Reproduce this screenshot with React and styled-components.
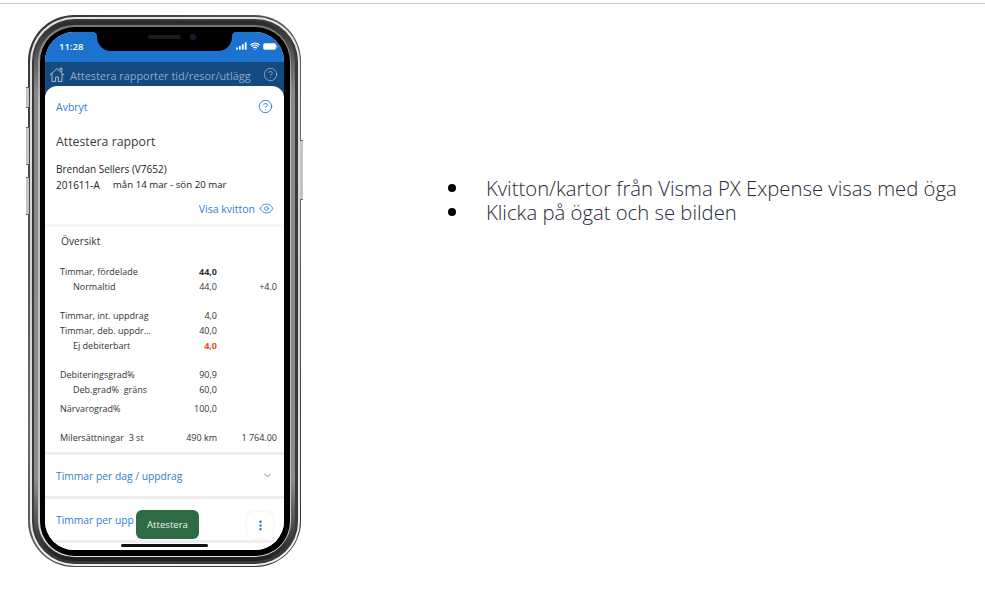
import React from "react"
import styled, { createGlobalStyle } from "styled-components"
import { CircleHelp, Eye, ChevronDown, EllipsisVertical, Wifi } from "lucide-react"

const Global = createGlobalStyle`
  html, body { margin: 0; padding: 0; background: #fff; }
  body { font-family: "Open Sans", sans-serif; overflow: hidden; }
`

const Page = styled.div`
  width: 985px;
  height: 591px;
  box-sizing: border-box;
  border-top: 1px solid #c9c9cd;
  margin-top: 3px;
  display: flex;
  align-items: flex-start;
  padding: 11px 0 0 28px;
`

const PhoneBody = styled.div`
  position: relative;
  flex: none;
  width: 273px;
  height: 552px;
`

// one ring of the metal edge, nested inside the next
const BezelRing = styled.div`
  height: 100%;
  box-sizing: border-box;
  padding: ${p => p.$pad}px;
  border-radius: ${p => p.$radius}px;
  background: ${p => p.$bg};
`

const SideButton = styled.span`
  position: absolute;
  left: ${p => (p.$right ? "auto" : "-2px")};
  right: ${p => (p.$right ? "-2px" : "auto")};
  top: ${p => p.$top}px;
  width: 3px;
  height: ${p => p.$h}px;
  box-sizing: border-box;
  background: #c4c4c4;
  border: 1px solid #666;
  border-width: 1px 0;
`

const Screen = styled.div`
  position: relative;
  height: 100%;
  overflow: hidden;
  border-radius: 29px;
  background: #fff;
  display: flex;
  flex-direction: column;
`

const Notch = styled.div`
  position: absolute;
  top: 0;
  left: 52px;
  width: 135px;
  height: 19px;
  background: #000;
  border-radius: 0 0 14px 14px;

  &::before,
  &::after {
    content: "";
    position: absolute;
    top: 0;
    width: 5px;
    height: 5px;
  }
  &::before {
    left: -5px;
    background: radial-gradient(circle at 0 100%, transparent 5px, #000 5.5px);
  }
  &::after {
    right: -5px;
    background: radial-gradient(circle at 100% 100%, transparent 5px, #000 5.5px);
  }
`

const Speaker = styled.span`
  position: absolute;
  top: 3px;
  left: 51px;
  width: 33px;
  height: 4px;
  border-radius: 2px;
  background: #1c1c1c;
`

const Camera = styled.span`
  position: absolute;
  top: 2px;
  left: 93px;
  width: 6px;
  height: 6px;
  border-radius: 50%;
  background: #10203a;
`

const StatusBar = styled.div`
  flex: none;
  height: 30px;
  box-sizing: border-box;
  background: #1b73cf;
  color: #fff;
  display: flex;
  align-items: center;
  justify-content: space-between;
  padding: 0 6px 2px 14px;
  font-size: 9.5px;
  font-weight: 600;
`

const StatusIcons = styled.div`
  display: flex;
  align-items: center;
  gap: 3px;
`

const AppHeader = styled.div`
  flex: none;
  height: 36px;
  box-sizing: border-box;
  background: #134a80;
  color: #8fa9c4;
  display: flex;
  align-items: flex-start;
  padding: 5px 6px 0 4px;
  gap: 5px;
  font-size: 11px;
  line-height: 17px;
  white-space: nowrap;
`

const HeaderTitle = styled.span`
  flex: 1;
  font-size: 10.9px;
`

const Sheet = styled.div`
  flex: 1;
  margin-top: -12px;
  border-radius: 12px 12px 0 0;
  background: #fff;
  overflow: hidden;
`

const TopRow = styled.div`
  height: 41px;
  display: flex;
  align-items: center;
  justify-content: space-between;
  padding: 0 11px;
`

const LinkText = styled.span`
  color: #2f80cf;
  font-size: 10.5px;
`

const SummaryBlock = styled.div`
  padding: 7px 11px 0;
  height: 100px;
  box-sizing: border-box;
  border-bottom: 3px solid #f6f6f6;
  color: #222;
`

const Heading = styled.div`
  font-size: 12.3px;
  line-height: 16px;
  color: #3a3a3a;
  margin-bottom: 11px;
`

const Meta = styled.div`
  font-size: 10px;
  line-height: 16px;
  display: flex;
  gap: 12px;
`

const DateRange = styled.span`
  font-size: 9.7px;
  margin-left: 1px;
`

const ReceiptLink = styled.div`
  display: flex;
  align-items: center;
  justify-content: flex-end;
  gap: 4px;
  margin: 8px -1px 0 0;
`

const Overview = styled.div`
  padding: 0 7px 0 15px;
  color: #333;
`

const OverviewTitle = styled.div`
  font-size: 10.2px;
  line-height: 14px;
  padding: 7px 0 16px 1px;
`

const Group = styled.div`
  margin-bottom: ${p => p.$gap ?? 14}px;
`

const Row = styled.div`
  display: grid;
  grid-template-columns: 112px 45px 60px;
  height: 15px;
  line-height: 15px;
  font-size: 9px;
  white-space: nowrap;
`

const Label = styled.span`
  padding-left: ${p => (p.$indent ? 13 : 0)}px;
`

const Value = styled.span`
  text-align: right;
  font-weight: ${p => (p.$bold ? 700 : 400)};
  color: ${p => (p.$red ? "#ea4b2a" : "inherit")};
`

const Accordion = styled.div`
  height: 44px;
  box-sizing: border-box;
  border-top: 3px solid #eeeeee;
  display: flex;
  align-items: center;
  justify-content: space-between;
  padding: 0 11px;
`

const AccordionText = styled.span`
  color: #2f80cf;
  font-size: 10.3px;
`

const ApproveButton = styled.div`
  position: absolute;
  left: 91px;
  top: 478px;
  width: 63px;
  height: 29px;
  border-radius: 6px;
  background: #2e6b45;
  color: #e9f1ec;
  font-size: 9.6px;
  display: flex;
  align-items: center;
  justify-content: center;
`

const MoreButton = styled.div`
  position: absolute;
  left: 202px;
  top: 480px;
  width: 26px;
  height: 26px;
  border-radius: 6px;
  background: #fff;
  box-shadow: 0 0 3px rgba(0, 0, 0, 0.1);
  color: #1b73cf;
  display: flex;
  align-items: center;
  justify-content: center;
`

const HomeBar = styled.span`
  position: absolute;
  left: 76px;
  top: 512px;
  width: 87px;
  height: 3px;
  border-radius: 2px;
  background: #111;
`

const Bullets = styled.ul`
  list-style: none;
  margin: 161px 0 0 0;
  padding: 0 0 0 147px;
  flex: none;
  font-size: 20.3px;
  line-height: 24px;
  font-weight: 300;
  color: #1f2a36;
  white-space: nowrap;
`

const Bullet = styled.li`
  display: flex;
  align-items: center;
`

const Dot = styled.span`
  width: 8px;
  height: 8px;
  flex: none;
  border-radius: 50%;
  background: #000;
  margin-right: 30px;
`

const SignalBars = () => (
  <svg width="11" height="8" viewBox="0 0 12 8" fill="#fff">
    <rect x="0" y="5.5" width="2" height="2.5" rx="0.4" />
    <rect x="3.2" y="4" width="2" height="4" rx="0.4" />
    <rect x="6.4" y="2" width="2" height="6" rx="0.4" />
    <rect x="9.6" y="0" width="2" height="8" rx="0.4" />
  </svg>
)

const Battery = () => (
  <svg width="15" height="7" viewBox="0 0 15 7">
    <rect x="0.4" y="0.4" width="12.4" height="6.2" rx="1.6" fill="#fff" stroke="#fff" strokeOpacity="0.6" strokeWidth="0.8" />
    <rect x="13.4" y="2.3" width="1" height="2.4" rx="0.5" fill="#fff" fillOpacity="0.7" />
  </svg>
)

const HomeIcon = () => (
  <svg width="16" height="16" viewBox="0 0 16 16" fill="none" stroke="#a9bdd2" strokeWidth="1" strokeLinejoin="round" style={{ flex: "none" }}>
    <path d="M0.8 8.2 8 1.6l7.2 6.6" />
    <path d="M3 6.5v8h3.6v-4.4h2.8v4.4H13v-8" />
    <path d="M11 3.4V1.2h1.8v3.8" />
  </svg>
)

const edgeDark = "linear-gradient(135deg, #333 0%, #6a6a6a 50%, #2c2c2c 100%)"
const edgeLight = "linear-gradient(180deg, #e6e6e6 0%, #cfcfcf 50%, #f0f0f0 100%)"
const edgeInner = "#3a3a3a"
const edgeGray = "linear-gradient(180deg, #2a2a2a 0%, #888 13%, #8c8c8c 85%, #1e1e1e 100%)"
const edgeLine = "linear-gradient(180deg, #777 0%, #bdbdbd 15%, #bdbdbd 85%, #e2e2e2 100%)"

export default function App() {
  return (
    <Page>
      <Global />
      <PhoneBody>
        <SideButton $top={72} $h={21} />
        <SideButton $top={112} $h={38} />
        <SideButton $top={162} $h={38} />
        <SideButton $right $top={125} $h={60} />
        <BezelRing $pad={1.5} $radius={46} $bg={edgeDark}>
          <BezelRing $pad={2} $radius={44.5} $bg={edgeLight}>
            <BezelRing $pad={2.5} $radius={42.5} $bg={edgeInner}>
              <BezelRing $pad={4} $radius={40} $bg={edgeGray}>
                <BezelRing $pad={1.5} $radius={36} $bg={edgeLine}>
                  <BezelRing $pad={5.5} $radius={34.5} $bg="#000">
                    <Screen>
                      <StatusBar>
                        <span>11:28</span>
                        <StatusIcons>
                          <SignalBars />
                          <Wifi size={10} color="#fff" strokeWidth={3} />
                          <Battery />
                        </StatusIcons>
                      </StatusBar>
                      <AppHeader>
                        <HomeIcon />
                        <HeaderTitle>Attestera rapporter tid/resor/utlägg</HeaderTitle>
                        <CircleHelp size={15} strokeWidth={1.2} color="#a9bdd2" />
                      </AppHeader>
                      <Sheet>
                        <TopRow>
                          <LinkText>Avbryt</LinkText>
                          <CircleHelp size={15} strokeWidth={1.5} color="#2f80cf" />
                        </TopRow>
                        <SummaryBlock>
                          <Heading>Attestera rapport</Heading>
                          <Meta>Brendan Sellers (V7652)</Meta>
                          <Meta>
                            <span>201611-A</span>
                            <DateRange>mån 14 mar - sön 20 mar</DateRange>
                          </Meta>
                          <ReceiptLink>
                            <LinkText>Visa kvitton</LinkText>
                            <Eye size={15} strokeWidth={1.4} color="#2f80cf" />
                          </ReceiptLink>
                        </SummaryBlock>
                        <Overview>
                          <OverviewTitle>Översikt</OverviewTitle>
                          <Group>
                            <Row><Label>Timmar, fördelade</Label><Value $bold>44,0</Value><Value /></Row>
                            <Row><Label $indent>Normaltid</Label><Value>44,0</Value><Value>+4.0</Value></Row>
                          </Group>
                          <Group>
                            <Row><Label>Timmar, int. uppdrag</Label><Value>4,0</Value><Value /></Row>
                            <Row><Label>Timmar, deb. uppdr…</Label><Value>40,0</Value><Value /></Row>
                            <Row><Label $indent>Ej debiterbart</Label><Value $bold $red>4,0</Value><Value /></Row>
                          </Group>
                          <Group $gap={4}>
                            <Row><Label>Debiteringsgrad%</Label><Value>90,9</Value><Value /></Row>
                            <Row><Label $indent>Deb.grad%&nbsp; gräns</Label><Value>60,0</Value><Value /></Row>
                          </Group>
                          <Group>
                            <Row><Label>Närvarograd%</Label><Value>100,0</Value><Value /></Row>
                          </Group>
                          <Group $gap={7}>
                            <Row><Label>Milersättningar&nbsp; 3 st</Label><Value>490 km</Value><Value>1 764.00</Value></Row>
                          </Group>
                        </Overview>
                        <Accordion>
                          <AccordionText>Timmar per dag / uppdrag</AccordionText>
                          <ChevronDown size={11} color="#2f80cf" />
                        </Accordion>
                        <Accordion>
                          <AccordionText>Timmar per upp</AccordionText>
                        </Accordion>
                        <Accordion />
                      </Sheet>
                      <Notch>
                        <Speaker />
                        <Camera />
                      </Notch>
                      <ApproveButton>Attestera</ApproveButton>
                      <MoreButton>
                        <EllipsisVertical size={13} strokeWidth={2.4} />
                      </MoreButton>
                      <HomeBar />
                    </Screen>
                  </BezelRing>
                </BezelRing>
              </BezelRing>
            </BezelRing>
          </BezelRing>
        </BezelRing>
      </PhoneBody>
      <Bullets>
        <Bullet><Dot />Kvitton/kartor från Visma PX Expense visas med öga</Bullet>
        <Bullet><Dot />Klicka på ögat och se bilden</Bullet>
      </Bullets>
    </Page>
  )
}
